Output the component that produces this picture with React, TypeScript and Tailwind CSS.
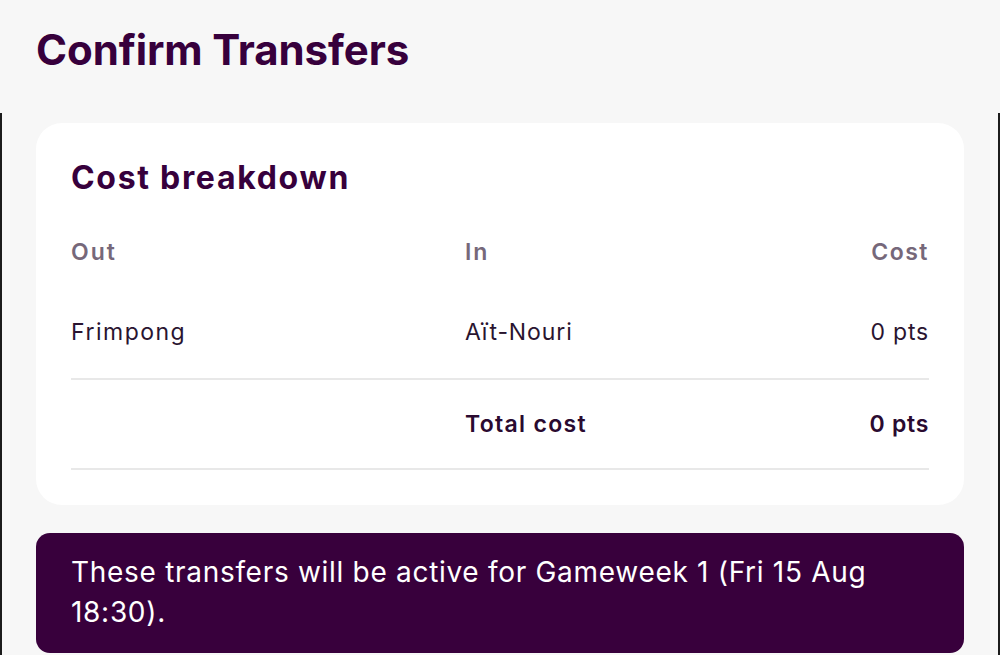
import React from "react";

const font = { fontFamily: "Inter, 'Noto Sans', sans-serif" };

export default function App() {
  return (
    <div className="h-[655px] w-[1000px] overflow-hidden bg-[#f7f7f7] text-[#37003c]" style={font}>
      <div className="h-[113px] px-[36px] pt-[24px]">
        <h1 className="text-[42px] font-bold leading-[52px] tracking-[-0.1px]">Confirm Transfers</h1>
      </div>
      <div className="border-x-[2px] border-[#1c1c1c] px-[34px] pt-[10px] h-[542px]">
        <div className="rounded-[26px] bg-white px-[35px] pt-[36px] pb-[35px]">
          <h2 className="text-[32px] font-bold leading-[38px] tracking-[1.7px]">Cost breakdown</h2>
          <div className="mt-[36px] grid grid-cols-[359px_1fr_auto] text-[23px]">
            <div className="h-[38px] flex items-center font-semibold text-[#76687a] tracking-[2px]">Out</div>
            <div className="h-[38px] flex items-center pl-[35px] font-semibold text-[#76687a] tracking-[2px]">In</div>
            <div className="h-[38px] flex items-center justify-end font-semibold text-[#76687a] tracking-[1.5px]">Cost</div>

            <div className="h-[109px] flex items-center pt-[16px] border-b-2 border-[#e8e8e8] text-[#2a1430] tracking-[1.5px]">Frimpong</div>
            <div className="h-[109px] flex items-center pt-[16px] pl-[35px] border-b-2 border-[#e8e8e8] text-[#2a1430] tracking-[0.9px]">Aït-Nouri</div>
            <div className="h-[109px] flex items-center justify-end pt-[16px] border-b-2 border-[#e8e8e8] text-[#2a1430] tracking-[0.8px]">0 pts</div>

            <div className="h-[90px] border-b-2 border-[#e8e8e8]"></div>
            <div className="h-[90px] flex items-center pl-[35px] border-b-2 border-[#e8e8e8] font-semibold text-[#2a0a30] tracking-[1.3px]">Total cost</div>
            <div className="h-[90px] flex items-center justify-end border-b-2 border-[#e8e8e8] font-semibold text-[#2a0a30] tracking-[0.7px]">0 pts</div>
          </div>
        </div>
        <div className="mt-[28px] rounded-[14px] bg-[#38003c] px-[35px] pt-[19px] pb-[21px] text-[28px] leading-[40px] text-white tracking-[0.7px]">
          These transfers will be active for Gameweek 1 (Fri 15 Aug 18:30).
        </div>
      </div>
    </div>
  );
}
